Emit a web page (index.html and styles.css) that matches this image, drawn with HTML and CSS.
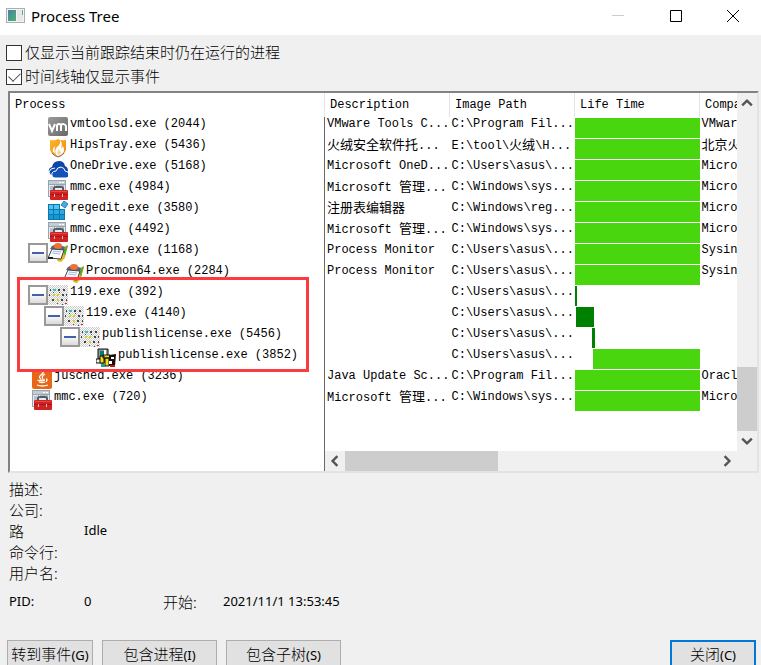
FILE: index.html
```html
<!DOCTYPE html>
<html lang="zh-CN">
<head>
<meta charset="utf-8">
<title>Process Tree</title>
<link rel="stylesheet" href="styles.css">
</head>
<body>
<svg class="sprite" aria-hidden="true">
  <defs>
    <linearGradient id="g-vm" x1="0" y1="0" x2="1" y2="1"><stop offset="0" stop-color="#9b9b9b"/><stop offset="1" stop-color="#686868"/></linearGradient>
    <linearGradient id="g-fire" x1="0" y1="0" x2="1" y2="1"><stop offset="0" stop-color="#fbb62a"/><stop offset="1" stop-color="#f08a10"/></linearGradient>
    <linearGradient id="g-box" x1="0" y1="0" x2="0" y2="1"><stop offset="0.4" stop-color="#ffffff"/><stop offset="1" stop-color="#d6d6d6"/></linearGradient>
    <linearGradient id="g-app" x1="0" y1="0" x2="1" y2="1"><stop offset="0" stop-color="#4a80a8"/><stop offset="1" stop-color="#52b070"/></linearGradient>
    <pattern id="p-dither" width="2" height="2" patternUnits="userSpaceOnUse"><path fill="#fff" d="M0 0h2v2H0z"/><path fill="#cacaca" d="M0 0h1v1H0zM1 1h1v1H1z"/></pattern>
  </defs>
  <symbol id="i-vm" viewBox="0 0 20 20">
    <rect width="20" height="19" rx="2" fill="url(#g-vm)"/>
    <path d="M1 7l3 7 3-7M9 14V9q0-2 2-2t2 2v5M13 9q0-2 2-2t3 2v5" fill="none" stroke="#fff" stroke-width="2"/>
  </symbol>
  <symbol id="i-hips" viewBox="0 0 20 20">
    <path d="M2 2q5 1 8-1 3 2 8 1v9q0 5-8 8-8-3-8-8z" fill="url(#g-fire)"/>
    <path d="M12 2q1 4-3 7-3 3-1 8l2 1q6-2 6-6 0-2-1-4-1 2-2 2 2-5-1-8zM7 8q-3 3-2 6l2 1q-1-3 0-7z" fill="#fff"/>
    <path d="M11 11q-3 3-1 6 4-1 3-3-2-1-2-3z" fill="#fbd3a0"/>
    <path d="M4 15q2 3 6 4 4-1 6-4" fill="none" stroke="#777" stroke-width="1"/>
  </symbol>
  <symbol id="i-onedrive" viewBox="0 0 20 20">
    <path d="M1 13q-1-4 3-5 1-6 7-6 5 0 6 5 3 1 3 5l-2 4H3z" fill="#0c46ad"/>
    <path d="M7 19q-4-1-3-5 1-2 4-2 1-4 5-4 4 1 4 4 4 0 4 4 0 3-3 3z" fill="#1552b8" stroke="#fff" stroke-width="1"/>
    <path d="M4 17q-4-1-3-4 1-4 6-4" fill="none" stroke="#fff" stroke-width="1"/>
  </symbol>
  <symbol id="i-mmc" viewBox="0 0 20 20">
    <rect x="0" y="0" width="18" height="17" fill="#98a4b0"/>
    <path d="M1 1h16v3H1z" fill="#c3ccd5"/><path d="M11 2h2v1h-2zM14 2h2v1h-2z" fill="#fff"/>
    <path d="M1 5h5v11H1zM7 5h10v11H7z" fill="#e8ecf0"/>
    <path d="M2 7h3M2 9h3M2 12h3M8 6h8" stroke="#8794a0"/>
    <path d="M6 11V8q0-1 2-1h5q2 0 2 1v3" fill="none" stroke="#555c66" stroke-width="2"/>
    <rect x="2" y="10" width="18" height="10" rx="1" fill="#cf2222"/>
    <path d="M2 14h18v1H2z" fill="#a81414"/><path d="M3 11h16v1H3z" fill="#e04a40"/>
    <path d="M6 14h1v3H6zM14 14h1v3h-1z" fill="#f4b8b0"/>
  </symbol>
  <symbol id="i-reg" viewBox="0 0 20 20">
    <path d="M0 3h12v5h5v11H0z" fill="#0878b0"/>
    <path d="M1 4h4v4H1zM6 4h5v4H6z" fill="#52c4ee"/><path d="M1 9h4v4H1zM6 9h5v4H6zM12 9h4v4h-4z" fill="#2cabe0"/><path d="M1 14h4v4H1zM6 14h5v4H6zM12 14h4v4h-4z" fill="#1897d0"/>
    <path d="M16 0l4 3-3 4-4-3z" fill="#45aee0" stroke="#2680b4"/>
  </symbol>
  <symbol id="i-procmon" viewBox="0 0 20 20">
    <path d="M13 8l4-5 2 1-2 11-4 4-4-1z" fill="#e8b820"/>
    <path d="M15 8l4-6 1 1-3 10z" fill="#59a830"/>
    <path d="M4 3q5-3 13 1l-1 3L2 6z" fill="#5b6472"/>
    <ellipse cx="10" cy="3" rx="4" ry="3" fill="#ef7137"/>
    <path d="M4 6l12 1-3 9L0 15z" fill="#f8fafc" stroke="#3c4452"/>
    <path d="M5 8l8 1M4 10l8 1" stroke="#9dbce0"/>
    <path d="M0 15h5" stroke="#222" stroke-width="2"/>
  </symbol>
  <symbol id="i-dots" viewBox="0 0 20 20">
    <rect width="20" height="20" fill="url(#p-dither)"/>
    <path d="M2 4h1v2H2zM10 4h2v2h-2zM15 4h2v2h-2zM1 9h1v2H1zM14 9h2v2h-2zM18 9h1v2h-1zM4 14h2v2H4zM13 14h2v2h-2zM18 14h1v2h-1zM5 7h1v1H5zM11 7h1v1h-1z" fill="#444"/>
    <path d="M5 4h3v2H5z" fill="#20c8d0"/>
    <path d="M5 9h2v2H5zM9 9h2v2H9zM9 14h2v2H9z" fill="#dcd410"/>
    <path d="M9 18h1v1H9zM17 18h2v1h-2z" fill="#e02828"/><path d="M14 19h1v1h-1z" fill="#2048d0"/>
  </symbol>
  <symbol id="i-pack" viewBox="0 0 20 20">
    <path d="M2 1h10v10H2z" fill="#8d9999" stroke="#111"/><path d="M4 3h5v5H4z" fill="#087878"/><path d="M8 2h2v5H8z" fill="#fff"/>
    <path d="M0 11h8v4H0z" fill="#eee" stroke="#111"/>
    <path d="M4 8h4v7H4zM7 7h7v3H7zM9 10h4v8H9z" fill="#f2df18" stroke="#111"/>
    <path d="M13 7l7-1-1 12h-6z" fill="#111"/><path d="M15 9h3v2h-3zM13 13h3v3h-3z" fill="#fff"/>
    <path d="M5 16h4v3H5z" fill="#18a0a0"/><path d="M14 17h5v2h-5z" fill="#c01818"/>
  </symbol>
  <symbol id="i-java" viewBox="0 0 20 20">
    <rect width="20" height="20" rx="2" fill="#e56717"/>
    <path d="M11 2q1 2-2 4t0 4M13 5q-4 2-2 5M6 11q-1 1 7 0M14 10q2 0 0 3M7 13q3 1 6 0M5 16q5 2 11 0" fill="none" stroke="#fff" stroke-width="1.3"/>
  </symbol>
  <symbol id="i-minus" viewBox="0 0 20 20">
    <rect x="1" y="1" width="18" height="18" fill="url(#g-box)" stroke="#999" stroke-width="2"/>
    <path d="M4 10h12" stroke="#4460a8" stroke-width="2"/>
  </symbol>
</svg>

<header class="titlebar">
  <svg class="app-icon" viewBox="0 0 20 16"><rect x="0.5" y="0.5" width="18" height="14" fill="#f4f4f4" stroke="#a9afb4"/><path d="M2 2h8v11H2z" fill="url(#g-app)"/><path d="M11 2h6v11h-6z" fill="#e5e8e9"/><path d="M16 2h1v5h-1z" fill="#62a890"/></svg>
  <h1>Process Tree</h1>
  <div class="caption">
    <button aria-label="最小化" disabled><svg viewBox="0 0 12 12"><path d="M0 5.500h12" stroke="#ccc"/></svg></button>
    <button aria-label="最大化"><svg viewBox="0 0 12 12"><path d="M.5.5h11v11H.5z" fill="none" stroke="#000"/></svg></button>
    <button aria-label="关闭窗口"><svg viewBox="0 0 12 12"><path d="M0 0l12 12M12 0L0 12" stroke="#000"/></svg></button>
  </div>
</header>

<main>
  <div class="options">
    <label><input type="checkbox"><span>仅显示当前跟踪结束时仍在运行的进程</span></label>
    <label><input type="checkbox" checked><span>时间线轴仅显示事件</span></label>
  </div>

  <section class="list">
    <div class="tree-pane">
      <table>
        <thead><tr><th>Process</th></tr></thead>
        <tbody>
          <tr><td><div class="node l1"><svg><use href="#i-vm"/></svg>vmtoolsd.exe (2044)</div></td></tr>
          <tr><td><div class="node l1"><svg><use href="#i-hips"/></svg>HipsTray.exe (5436)</div></td></tr>
          <tr><td><div class="node l1"><svg><use href="#i-onedrive"/></svg>OneDrive.exe (5168)</div></td></tr>
          <tr><td><div class="node l1"><svg><use href="#i-mmc"/></svg>mmc.exe (4984)</div></td></tr>
          <tr><td><div class="node l1"><svg><use href="#i-reg"/></svg>regedit.exe (3580)</div></td></tr>
          <tr><td><div class="node l1"><svg><use href="#i-mmc"/></svg>mmc.exe (4492)</div></td></tr>
          <tr><td><div class="node l1 open"><button aria-label="折叠"><svg><use href="#i-minus"/></svg></button><svg><use href="#i-procmon"/></svg>Procmon.exe (1168)</div></td></tr>
          <tr><td><div class="node l2"><svg><use href="#i-procmon"/></svg>Procmon64.exe (2284)</div></td></tr>
          <tr><td><div class="node l1 open"><button aria-label="折叠"><svg><use href="#i-minus"/></svg></button><svg><use href="#i-dots"/></svg>119.exe (392)</div></td></tr>
          <tr><td><div class="node l2 open"><button aria-label="折叠"><svg><use href="#i-minus"/></svg></button><svg><use href="#i-dots"/></svg>119.exe (4140)</div></td></tr>
          <tr><td><div class="node l3 open"><button aria-label="折叠"><svg><use href="#i-minus"/></svg></button><svg><use href="#i-dots"/></svg>publishlicense.exe (5456)</div></td></tr>
          <tr><td><div class="node l4"><svg><use href="#i-pack"/></svg>publishlicense.exe (3852)</div></td></tr>
          <tr><td><div class="node l0"><svg><use href="#i-java"/></svg>jusched.exe (3236)</div></td></tr>
          <tr><td><div class="node l0"><svg><use href="#i-mmc"/></svg>mmc.exe (720)</div></td></tr>
        </tbody>
      </table>
      <div class="highlight"></div>
    </div>
    <div class="detail-pane">
      <table>
        <colgroup><col class="wide"><col class="wide"><col class="wide"><col></colgroup>
        <thead><tr><th>Description</th><th>Image Path</th><th>Life Time</th><th>Compa</th></tr></thead>
        <tbody>
          <tr><td>VMware Tools C...</td><td>C:\Program Fil...</td><td class="life"><div class="bar"></div></td><td>VMwar</td></tr>
          <tr><td><span class="han">火绒安全软件托</span>...</td><td>E:\tool\<span class="han">火绒</span>\H...</td><td class="life"><div class="bar"></div></td><td><span class="han">北京火</span></td></tr>
          <tr><td>Microsoft OneD...</td><td>C:\Users\asus\...</td><td class="life"><div class="bar"></div></td><td>Micro</td></tr>
          <tr><td>Microsoft <span class="han">管理</span>...</td><td>C:\Windows\sys...</td><td class="life"><div class="bar"></div></td><td>Micro</td></tr>
          <tr><td><span class="han">注册表编辑器</span></td><td>C:\Windows\reg...</td><td class="life"><div class="bar"></div></td><td>Micro</td></tr>
          <tr><td>Microsoft <span class="han">管理</span>...</td><td>C:\Windows\sys...</td><td class="life"><div class="bar"></div></td><td>Micro</td></tr>
          <tr><td>Process Monitor</td><td>C:\Users\asus\...</td><td class="life"><div class="bar"></div></td><td>Sysin</td></tr>
          <tr><td>Process Monitor</td><td>C:\Users\asus\...</td><td class="life"><div class="bar"></div></td><td>Sysin</td></tr>
          <tr><td></td><td>C:\Users\asus\...</td><td class="life"><div class="bar ended" style="width:1.6%"></div></td><td></td></tr>
          <tr><td></td><td>C:\Users\asus\...</td><td class="life"><div class="bar ended" style="margin-left:0.8%;width:14.4%"></div></td><td></td></tr>
          <tr><td></td><td>C:\Users\asus\...</td><td class="life"><div class="bar ended" style="margin-left:13.6%;width:2.4%"></div></td><td></td></tr>
          <tr><td></td><td>C:\Users\asus\...</td><td class="life"><div class="bar" style="margin-left:14.4%;width:85.6%"></div></td><td></td></tr>
          <tr><td>Java Update Sc...</td><td>C:\Program Fil...</td><td class="life"><div class="bar"></div></td><td>Oracl</td></tr>
          <tr><td>Microsoft <span class="han">管理</span>...</td><td>C:\Windows\sys...</td><td class="life"><div class="bar"></div></td><td>Micro</td></tr>
        </tbody>
      </table>
      <div class="vscroll">
        <button aria-label="向上滚动"><svg viewBox="0 0 10 10"><path d="M1 7l4-4 4 4"/></svg></button>
        <div class="track"><div class="thumb"></div></div>
        <button aria-label="向下滚动"><svg viewBox="0 0 10 10"><path d="M1 3l4 4 4-4"/></svg></button>
      </div>
      <div class="hscroll">
        <button aria-label="向左滚动"><svg viewBox="0 0 10 10"><path d="M7 1L3 5l4 4"/></svg></button>
        <div class="track"><div class="thumb"></div></div>
        <button aria-label="向右滚动"><svg viewBox="0 0 10 10"><path d="M3 1l4 4-4 4"/></svg></button>
      </div>
    </div>
  </section>

  <dl class="info">
    <dt>描述:</dt><dd></dd>
    <dt>公司:</dt><dd></dd>
    <dt>路</dt><dd>Idle</dd>
    <dt>命令行:</dt><dd></dd>
    <dt>用户名:</dt><dd></dd>
  </dl>
  <dl class="info pid">
    <dt class="latin">PID:</dt><dd>0</dd><dt>开始:</dt><dd>2021/11/1 13:53:45</dd>
  </dl>

  <footer class="actions">
    <button class="narrow">转到事件<span>(G)</span></button>
    <button>包含进程<span>(I)</span></button>
    <button>包含子树<span>(S)</span></button>
    <button class="narrow primary">关闭<span>(C)</span></button>
  </footer>
</main>
</body>
</html>
```
FILE: styles.css
```css
* { box-sizing: border-box; }
html, body { height: 100%; }
body {
  margin: 0;
  overflow: hidden;
  background: #f0f0f0;
  color: #000;
  font: 15px/21px "Noto Sans", "Noto Sans CJK SC", sans-serif;
}
.sprite { position: absolute; width: 0; height: 0; }
button { margin: 0; padding: 0; border: 0; background: none; color: inherit; font: inherit; }
svg { display: block; }

.titlebar { display: flex; align-items: center; height: 35px; padding-left: 6px; background: #fff; }
.app-icon { width: 20px; height: 16px; margin-bottom: 4px; }
h1 { margin: 0 auto 4px 5px; font: 15px/20px "Noto Sans", sans-serif; }
.caption { display: flex; align-self: flex-start; height: 32px; }
.caption button { display: grid; place-items: center; width: 58px; }
.caption button:last-child { width: 56px; }
.caption svg { width: 12px; height: 12px; }

.options { padding: 6px 6px 2px; }
.options label { display: flex; align-items: center; gap: 3px; height: 24px; font-family: "Noto Sans CJK SC", sans-serif; font-weight: 300; }
.options span { padding-bottom: 4px; }
.options input {
  appearance: none;
  display: grid;
  place-items: center;
  width: 16px;
  height: 16px;
  margin: 0;
  border: 1px solid #333;
  background: #fff;
}
.options input:checked::after {
  content: "";
  width: 10px;
  height: 6px;
  margin-top: -3px;
  border: solid #444;
  border-width: 0 0 1px 1px;
  transform: rotate(-45deg);
}

.list {
  display: grid;
  grid-template-columns: 314px minmax(0, 1fr);
  height: 382px;
  margin: 0 2px 0 8px;
  border: 2px solid;
  border-color: #828282 #e3e3e3 #e3e3e3 #828282;
  background: #fff;
  font: 12px/15px "Liberation Mono", "Noto Sans CJK SC", monospace;
}
.list table { width: 100%; border-collapse: collapse; table-layout: fixed; }
.list th { height: 24px; padding: 0 5px; text-align: left; font-weight: normal; white-space: nowrap; overflow: hidden; }
.list td { height: 21px; padding: 0 2px; vertical-align: top; white-space: nowrap; overflow: hidden; }
.han { font-size: 13px; }
.tree-pane { position: relative; }
.tree-pane td { padding: 0; }
.node { display: flex; height: 21px; }
.node svg { flex: none; width: 20px; height: 20px; margin-right: 2px; }
.node button { height: 20px; }
.node button svg { margin: 0; }
.l0 { padding-left: 22px; }
.l1 { padding-left: 38px; }
.l2 { padding-left: 54px; }
.l3 { padding-left: 70px; }
.l4 { padding-left: 86px; }
.l1.open { padding-left: 18px; }
.l2.open { padding-left: 34px; }
.l3.open { padding-left: 50px; }
.highlight { position: absolute; left: 7px; top: 184px; width: 292px; height: 95px; border: 3px solid #fb3b3e; pointer-events: none; }

.detail-pane {
  display: grid;
  grid-template: minmax(0, 1fr) 20px / minmax(0, 1fr) 20px;
  background: #f0f0f0;
}
.detail-pane table { background: #fff; align-self: start; }
.detail-pane::before { content: ""; grid-area: 1 / 1; background: #fff; border-left: 1px solid #696969; }
.detail-pane table { grid-area: 1 / 1; }
.detail-pane th { border-left: 1px solid #e5e5e5; }
.detail-pane td:first-child { border-left: 1px solid #696969; }
.wide { width: 125px; }
.detail-pane td.life { padding: 1px 0 0; }
.bar { height: 20px; background: #4ad60e; }
.bar.ended { background: #008000; }

.vscroll, .hscroll { display: flex; }
.vscroll { flex-direction: column; grid-area: 1 / 2; }
.hscroll { grid-area: 2 / 1; border-left: 1px solid #696969; }
.track { flex: 1; display: flex; }
.vscroll .track { flex-direction: column; justify-content: flex-end; }
.thumb { background: #cdcdcd; }
.vscroll .thumb { height: 20%; }
.hscroll .thumb { width: 41%; }
.vscroll button, .hscroll button { flex: none; display: grid; place-items: center; width: 20px; height: 20px; }
.vscroll svg, .hscroll svg { width: 12px; height: 12px; }
.vscroll path, .hscroll path { fill: none; stroke: #555; stroke-width: 2; }

.info { display: grid; grid-template-columns: 75px 1fr; grid-auto-rows: 21px; margin: 5px 9px 0; }
.info dt { font-family: "Noto Sans CJK SC", sans-serif; font-weight: 300; }
.info dd { margin: 0; font-size: 13px; }
.info .latin { font: 13px/21px "Noto Sans", sans-serif; }
.pid { grid-template-columns: 75px 79px 60px 1fr; margin-top: 8px; }

.actions { display: flex; gap: 9px; margin-top: 28px; padding: 0 5px 0 7px; }
.actions button {
  width: 115px;
  height: 27px;
  border: 1px solid #adadad;
  background: #e1e1e1;
  font-family: "Noto Sans CJK SC", sans-serif;
  font-weight: 300;
  line-height: 21px;
  white-space: nowrap;
}
.actions button span { font: 13px "Noto Sans", sans-serif; }
.actions .narrow { width: 86px; }
.actions .primary { margin-left: auto; border: 2px solid #0078d7; }
```
